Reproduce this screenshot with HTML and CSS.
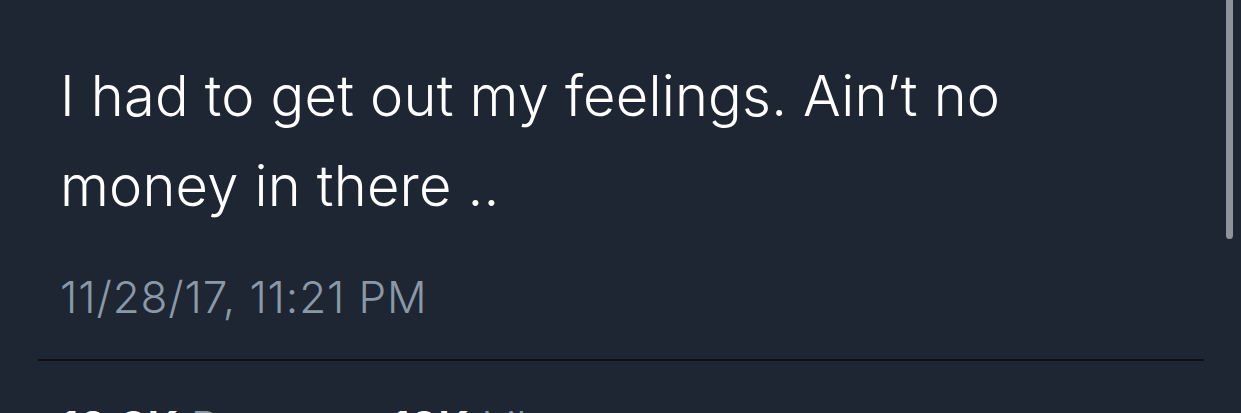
FILE: index.html
```html
<!DOCTYPE html>
<html>
<head>
<meta charset="utf-8">
<link rel="stylesheet" href="styles.css">
</head>
<body>
<div class="tweet">
  <p class="text">I had to get out my feelings. Ain’t no money in there ..</p>
  <div class="time">11/28/17, 11:21 PM</div>
  <div class="divider"></div>
  <div class="stats"><span class="num">10.3K</span> <span class="label">Retweets</span> <span class="num">13K</span> <span class="label">Likes</span></div>
</div>
<div class="scrollbar"></div>
</body>
</html>
```
FILE: styles.css
```css
html, body {
  margin: 0;
  padding: 0;
  background: #1f2633;
  overflow: hidden;
  height: 413px;
}
body {
  font-family: Inter, Roboto, "Liberation Sans", sans-serif;
}
.tweet {
  padding: 0 37px 0 38px;
}
.text {
  margin: 0;
  padding: 51px 0 0 22px;
  width: 1000px;
  color: #ffffff;
  font-size: 56px;
  font-weight: 300;
  line-height: 90px;
  letter-spacing: 0.2px;
}
.time {
  padding: 36px 0 0 22px;
  color: #8a99a8;
  font-size: 44px;
  font-weight: 300;
  line-height: 60px;
  letter-spacing: 0.9px;
}
.divider {
  margin-top: 32px;
  height: 2px;
  background: #0d1117;
}
.stats {
  padding: 36px 0 0 22px;
  font-size: 44px;
  line-height: 60px;
  white-space: nowrap;
}
.num {
  color: #ffffff;
  font-weight: 600;
}
.label {
  color: #8a99a8;
  font-weight: 300;
}
.scrollbar {
  position: absolute;
  top: 0;
  left: 1226px;
  width: 7px;
  height: 239px;
  border-radius: 0 0 4px 4px;
  background: #8e949c;
}
```
